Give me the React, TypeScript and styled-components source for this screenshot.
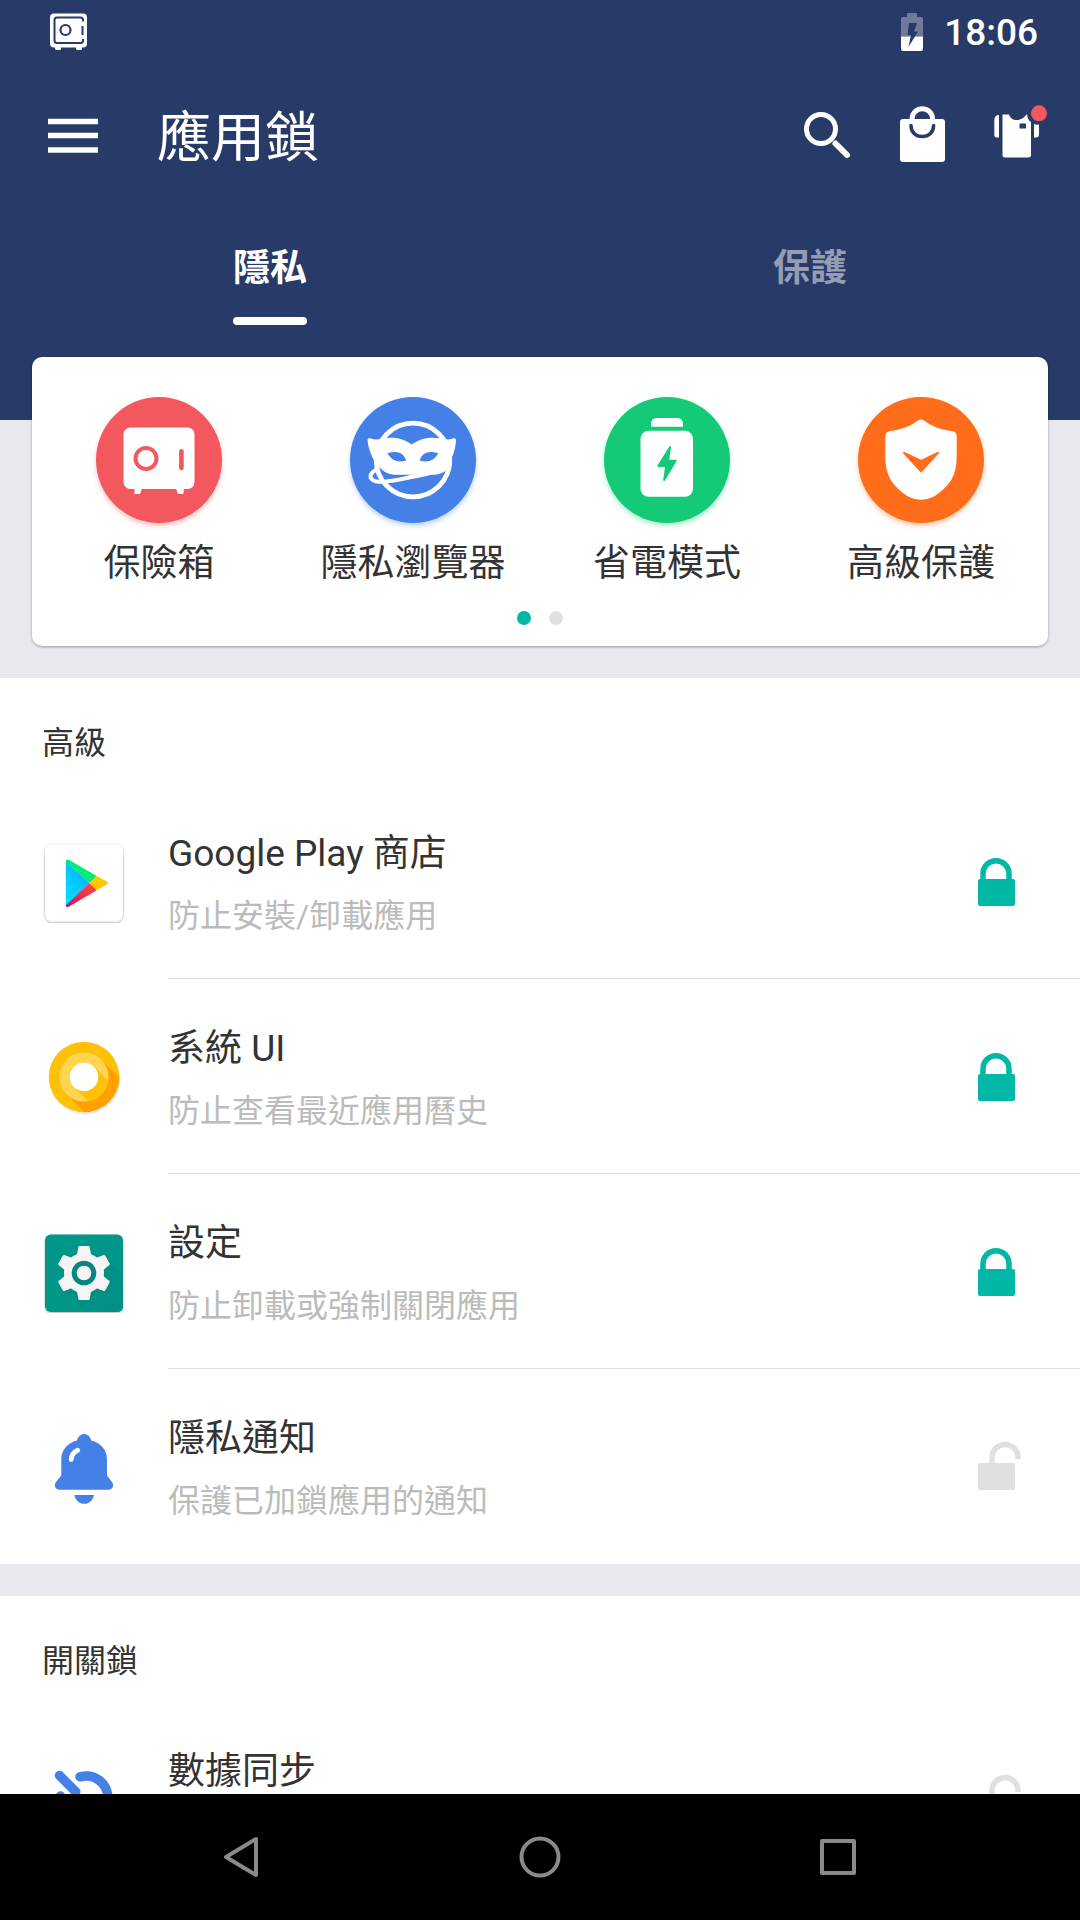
import React, { useState } from "react";
import styled, { createGlobalStyle } from "styled-components";

const color = {
  navy: "#283a68",
  canvas: "#e8e9ee",
  teal: "#01b8a7",
  red: "#f3585f",
  blue: "#4480e6",
  green: "#15ca76",
  orange: "#ff6d1a",
  ink: "#333333",
  muted: "#bbbbbb",
  idle: "#e0e0e0",
};

const GlobalStyle = createGlobalStyle`
  *, *::before, *::after { box-sizing: border-box; }
  body {
    margin: 0;
    background: ${color.canvas};
    color: ${color.ink};
    font-family: Roboto, "Noto Sans CJK TC", sans-serif;
  }
  h1, h2, p, ul { margin: 0; padding: 0; font-weight: 400; }
  ul { list-style: none; }
  button {
    border: 0;
    padding: 0;
    background: none;
    color: inherit;
    font: inherit;
    cursor: pointer;
  }
  svg { display: block; }
`;

const Screen = styled.div`
  display: flex;
  flex-direction: column;
  height: 100vh;
`;

const Content = styled.main`
  flex: 1;
  min-height: 0;
  overflow-y: auto;
  scrollbar-width: none;
`;

const Header = styled.header`
  padding-bottom: 95px;
  background: ${color.navy};
  color: #fff;
`;

const StatusBar = styled.div`
  display: flex;
  align-items: center;
  justify-content: space-between;
  height: 63px;
  padding: 0 42px 0 50px;
`;

const StatusGroup = styled.div`
  display: flex;
  align-items: center;
  gap: 21px;
`;

const Clock = styled.time`
  padding-top: 3px;
  font-size: 37px;
  font-weight: 500;
  line-height: 44px;
`;

const Toolbar = styled.div`
  display: flex;
  align-items: center;
  height: 145px;
  padding: 0 14px 0 25px;
`;

const ToolButton = styled.button`
  width: 96px;
  height: 96px;
`;

const Title = styled.h1`
  flex: 1;
  padding: 6px 0 0 36px;
  font-size: 54px;
  line-height: 76px;
`;

const Tabs = styled.div`
  display: grid;
  grid-template-columns: repeat(2, 1fr);
  height: 117px;
`;

const Tab = styled.button<{ $active: boolean }>`
  display: flex;
  flex-direction: column;
  align-items: center;
  padding-top: 35px;
  color: ${(p) => (p.$active ? "#fff" : "#949db4")};
  font-size: 37px;
  font-weight: 700;
  line-height: 52px;

  &::after {
    content: "";
    width: 74px;
    height: 8px;
    margin-top: 22px;
    border-radius: 4px;
    background: ${(p) => (p.$active ? "#fff" : "transparent")};
  }
`;

const Card = styled.section`
  margin: -63px 32px 32px;
  padding: 40px 0 21px;
  border-radius: 10px;
  background: #fff;
  box-shadow: 0 1px 3px rgba(0, 0, 0, 0.35);
`;

const Features = styled.div`
  display: grid;
  grid-template-columns: repeat(4, 1fr);
`;

const Feature = styled.button`
  display: flex;
  flex-direction: column;
  align-items: center;
  gap: 15px;
  font-size: 37px;
  line-height: 52px;
`;

const Disc = styled.span<{ $fill: string }>`
  width: 126px;
  height: 126px;
  border-radius: 50%;
  background: ${(p) => p.$fill};
  box-shadow: 0 3px 5px ${(p) => p.$fill}59;
`;

const Pager = styled.div`
  display: flex;
  justify-content: center;
  gap: 18px;
  margin-top: 21px;
`;

const Dot = styled.span<{ $active?: boolean }>`
  width: 14px;
  height: 14px;
  border-radius: 50%;
  background: ${(p) => (p.$active ? color.teal : color.idle)};
`;

const Section = styled.section`
  background: #fff;

  & + & {
    margin-top: 32px;
  }
`;

const SectionTitle = styled.h2`
  padding: 43px 42px 19px;
  font-size: 32px;
  line-height: 44px;
`;

const Row = styled.li`
  display: flex;
  min-height: 195px;
  padding-left: 42px;
`;

const AppIcon = styled.span`
  align-self: center;
  width: 84px;
  margin-right: 42px;
  padding-bottom: 1px;
`;

const RowBody = styled.div`
  display: flex;
  flex: 1;
  align-items: center;
  padding-right: 42px;
  border-bottom: 1px solid ${color.idle};

  ${Row}:last-child & {
    border-color: transparent;
  }
`;

const RowText = styled.div`
  display: flex;
  flex: 1;
  flex-direction: column;
  align-self: flex-start;
  gap: 14px;
  padding-top: 44px;
`;

const RowTitle = styled.p`
  font-size: 37px;
  line-height: 52px;
`;

const RowNote = styled.p`
  color: ${color.muted};
  font-size: 32px;
  line-height: 40px;
  padding-top: 2px;
`;

const LockButton = styled.button`
  width: 84px;
  height: 84px;
`;

const NavBar = styled.nav`
  display: grid;
  grid-template-columns: repeat(3, 1fr);
  flex: none;
  height: 126px;
  padding: 0 93px;
  background: #000;
`;

const NavButton = styled.button`
  display: flex;
  align-items: center;
  justify-content: center;
`;

/* Status bar icons */

const StatusSafe = () => (
  <svg width="38" height="38" viewBox="0 0 38 38" aria-hidden="true">
    <rect x="0" y="0.5" width="37" height="34" rx="4" fill="#fff" />
    <rect x="5" y="33" width="6" height="4" rx="1.5" fill="#fff" />
    <rect x="26" y="33" width="6" height="4" rx="1.5" fill="#fff" />
    <path
      d="M33 8.5V7q0-2.500-2.500-2.500H7q-2.500 0-2.500 2.500v20.500q0 2.500 2.500 2.500h23.500q2.500 0 2.500-2.500V26M32.500 13v9"
      fill="none"
      stroke={color.navy}
      strokeWidth="2"
    />
    <circle cx="15.500" cy="17" r="5" fill="none" stroke={color.navy} strokeWidth="2.200" />
  </svg>
);

const StatusBattery = () => (
  <svg width="22" height="38" viewBox="0 0 22 38" aria-hidden="true">
    <path d="M6 0h10v4h4q2 0 2 2v17.500H0V6q0-2 2-2h4z" fill="#6f7b99" />
    <path d="M0 23.500h22V36q0 2-2 2H2q-2 0-2-2z" fill="#fff" />
    <path d="M8 10h8l-3 8.500h4L7.500 34l2.500-12H6.500z" fill={color.navy} />
  </svg>
);

/* Toolbar icons */

const MenuIcon = () => (
  <svg width="96" height="96" viewBox="0 0 96 96" aria-hidden="true">
    <path d="M23 33.500h50M23 47.500h50M23 62h50" stroke="#fff" strokeWidth="5.500" />
  </svg>
);

const SearchIcon = () => (
  <svg width="96" height="96" viewBox="0 0 96 96" aria-hidden="true">
    <circle cx="43" cy="41" r="14.500" fill="none" stroke="#fff" strokeWidth="5" />
    <path d="M57.500 55.500L69 67" stroke="#fff" strokeWidth="6" strokeLinecap="round" />
  </svg>
);

const BagIcon = () => (
  <svg width="96" height="96" viewBox="0 0 96 96" aria-hidden="true">
    <rect x="26" y="31" width="45" height="43" rx="3" fill="#fff" />
    <path d="M38 32.500V31a10.300 10.300 0 0 1 20.600 0v1.500" fill="none" stroke="#fff" strokeWidth="5" />
    <path
      d="M37 37.500c0 6.500 4.500 11 11.200 11s11.400-4.500 11.400-11"
      fill="none"
      stroke={color.navy}
      strokeWidth="3.500"
      strokeLinecap="round"
    />
  </svg>
);

const ShirtIcon = () => (
  <svg width="96" height="96" viewBox="0 0 96 96" aria-hidden="true">
    <path
      d="M32.500 26.500H39c1.500 4 4 5.500 7.500 5.500 5 0 7.500-2.500 10.500-6 .5 4 1.500 6.500 4 8v33q0 2.500-2.500 2.500H35q-2.500 0-2.500-2.500z"
      fill="#fff"
    />
    <path d="M29 27v22.500h-2q-2.700 0-2.700-2.700V32.500Q24.300 27 29 27z" fill="#fff" />
    <path d="M64 36q2.500 1 5 .5V46q0 3.500-3 3.500h-2z" fill="#fff" />
    <rect x="49.500" y="35.500" width="6.500" height="5" rx="0.500" fill={color.navy} />
    <circle cx="69" cy="25.300" r="8" fill={color.red} />
  </svg>
);

/* Feature icons */

const SafeArt = () => (
  <svg width="126" height="126" viewBox="0 0 126 126" aria-hidden="true">
    <rect x="27.500" y="30.500" width="71" height="61.500" rx="7" fill="#fff" />
    <path d="M39 91h7l-1.500 5q-.5 1-1.500 1h-3.500q-1.500 0-1.200-1.500zM80 91h7.700v4.500q0 1.500-1.500 1.500h-3q-1.200 0-1.700-1z" fill="#fff" />
    <circle cx="50" cy="61.500" r="10.500" fill="none" stroke={color.red} strokeWidth="4" />
    <path d="M85.400 54.300v16.700" stroke={color.red} strokeWidth="4.600" strokeLinecap="round" />
  </svg>
);

const MaskArt = () => (
  <svg width="126" height="126" viewBox="0 0 126 126" aria-hidden="true">
    <circle cx="63" cy="63" r="36.800" fill="none" stroke="#fff" strokeWidth="4.800" />
    <path
      d="M17.500 43.500c0-2.200 1.600-2.900 3.500-1.900 3 1.400 7 1 12 0 12-2.200 21 .400 28.700 6 8-5.600 17-8.200 29-6 5 1 9 1.400 12 0 2-1 3.500 0 3.300 2.200-.7 7-2 12.700-4.300 17.200 0 5 .300 6-.200 8.500C96 74 91 77.700 84 77.700H43c-8-1.200-13.500-6-18-13-4.200-6.500-6.800-14-7.500-21.200z"
      fill="#fff"
    />
    <path
      d="M37.500 56.300c10.500-3.300 16.500.7 18.700 7.300-8.700 2.300-14.700 0-18.700-7.300zM88.300 56.300c-10.500-3.300-16.500.7-18.700 7.300 8.700 2.300 14.700 0 18.700-7.300z"
      fill={color.blue}
    />
    <path
      d="M98.500 68C88 75 75 77.500 60 80.300c-12 2.700-24 4.900-31.500 4.400-8-.700-9.500-4.900-6.500-8.700 1.200-1.500 2.500-2.300 4-2.800"
      fill="none"
      stroke="#fff"
      strokeWidth="4"
    />
    <path d="M30.300 71.500c3.500 3.800 8 6 14 6.500 4 .4 8 .2 12.500.4-8 2-15 3.500-22 3.800-2.500-3.500-4-7.200-4.500-10.700z" fill={color.blue} />
  </svg>
);

const BatteryArt = () => (
  <svg width="126" height="126" viewBox="0 0 126 126" aria-hidden="true">
    <path d="M47 29.700V27q0-6 6-6h20q6 0 6 6v2.700z" fill="#fff" />
    <rect x="36.500" y="33.800" width="52.500" height="66" rx="8" fill="#fff" />
    <path
      d="M65.300 49.500c.5-1 1.800-.6 1.700.5L65.200 62.700h6.300c1.200 0 1.500.8 1 1.600L61 83.400c-.6 1-1.900.6-1.800-.5L61 70h-6.400c-1.100 0-1.500-.8-1-1.700z"
      fill={color.green}
    />
  </svg>
);

const ShieldArt = () => (
  <svg width="126" height="126" viewBox="0 0 126 126" aria-hidden="true">
    <path
      d="M60.500 23.300q2.500-1.600 5 0C75 30 81 32 94.500 34.300q4.200.7 4.200 5.500V60c0 19-7.500 29.500-22.700 39.500q-6.500 3.300-13 3.300t-13-3.300C34.800 89.500 27.300 79 27.300 60V39.800q0-4.800 4.200-5.500C45 32 51 30 60.500 23.300z"
      fill="#fff"
    />
    <path d="M46.500 55L63 62.700 79.500 55c1.300-.4 2 .4 1.200 1.400L64 74.700q-1 1-2 0L45.300 56.400c-.8-1-.1-1.800 1.200-1.400z" fill={color.orange} />
  </svg>
);

/* List icons */

const PlayArt = () => (
  <svg width="84" height="84" viewBox="0 0 84 84" aria-hidden="true">
    <defs>
      <linearGradient id="playBlue" x1="1" y1="0" x2="0" y2="1">
        <stop offset="0.200" stopColor="#00b4ff" />
        <stop offset="1" stopColor="#00e3ff" />
      </linearGradient>
      <linearGradient id="playRed" x1="1" y1="0" x2="0" y2="1">
        <stop offset="0.300" stopColor="#ff3a44" />
        <stop offset="1" stopColor="#c31162" />
      </linearGradient>
      <filter id="playShade" x="-10%" y="-10%" width="120%" height="120%">
        <feDropShadow dx="0" dy="0.800" stdDeviation="1" floodOpacity="0.400" />
      </filter>
    </defs>
    <rect x="3" y="5.500" width="78" height="77" rx="7" fill="#fff" filter="url(#playShade)" />
    <path d="M23.800 21.500L47.500 44 23.800 67.500z" fill="url(#playBlue)" />
    <path d="M23.800 22.500q.2-3 3-1.700l28 16.200-7.300 7z" fill="#00ee76" />
    <path d="M23.800 66.500q.2 2.500 3 1.200l28-16.400-7.300-7.300z" fill="url(#playRed)" />
    <path d="M54.800 37l10 5.600q2.400 1.500 0 3l-10 5.700-7.300-7.300z" fill="#ffc900" />
  </svg>
);

const OreoArt = () => (
  <svg width="84" height="84" viewBox="0 0 84 84" aria-hidden="true">
    <defs>
      <clipPath id="oreoOuter"><circle cx="42" cy="43" r="35.300" /></clipPath>
      <clipPath id="oreoMid"><circle cx="42" cy="43" r="24.600" /></clipPath>
    </defs>
    <circle cx="43" cy="45" r="35.500" fill="#ececec" />
    <circle cx="42" cy="43" r="35.300" fill="#ffc107" />
    <path d="M59.400 25.600l40 40-34.800 34.800-40-40z" fill="#ffa000" clipPath="url(#oreoOuter)" />
    <circle cx="42" cy="43" r="24.600" fill="#ffd54f" />
    <path d="M52 33l40 40-20 20-40-40z" fill="#ffc107" clipPath="url(#oreoMid)" />
    <circle cx="42" cy="43" r="14.200" fill="#fff" />
  </svg>
);

const gearTeeth = [0, 60, 120, 180, 240, 300];

const SettingsArt = () => (
  <svg width="84" height="84" viewBox="0 0 84 84" aria-hidden="true">
    <defs>
      <filter id="tileShade" x="-10%" y="-10%" width="120%" height="120%">
        <feDropShadow dx="0" dy="0.800" stdDeviation="0.800" floodOpacity="0.350" />
      </filter>
    </defs>
    <rect x="3" y="5.500" width="78" height="77.500" rx="6" fill="#009688" filter="url(#tileShade)" />
    <path d="M66 32l15 14v31q0 6-6 6H43L22 62z" fill="#009085" />
    <g fill="#f5f5f5">
      <circle cx="42" cy="44" r="20" />
      {gearTeeth.map((angle) => (
        <path
          key={angle}
          d="M37.500 17h9q1 0 1.200 1l1.300 7.500 3.500 3.500h-21l3.500-3.500L36.300 18q.2-1 1.200-1z"
          transform={`rotate(${angle} 42 44)`}
        />
      ))}
    </g>
    <circle cx="42" cy="44" r="9.800" fill="#f5f5f5" stroke="#0a8585" strokeWidth="5" />
  </svg>
);

const BellArt = () => (
  <svg width="84" height="84" viewBox="0 0 84 84" aria-hidden="true">
    <path
      d="M35 16.600a7.200 7.800 0 0 1 14.200 0C58.500 19 65 26 65 35v16.500l5 6.500c2.500 3.500.5 7.700-3.500 7.700h-49c-4 0-6-4.200-3.500-7.700l5.300-6.500V35C19.300 26 25.800 19 35 16.600z"
      fill={color.blue}
    />
    <path d="M32.300 71h19.800c-1.300 5.500-5 8.800-9.900 8.800s-8.600-3.300-9.900-8.800z" fill={color.blue} />
    <path d="M29.200 35.500c.2-4.500 2.500-7.500 6.500-9.300" fill="none" stroke="#fff" strokeWidth="4.800" strokeLinecap="round" />
  </svg>
);

const SyncOffArt = () => (
  <svg width="84" height="84" viewBox="0 0 84 84" aria-hidden="true">
    <g fill="none" stroke={color.blue} strokeWidth="9.500" strokeLinecap="round">
      <path d="M17.500 18.500l50 50" strokeDasharray="23 100" />
      <path d="M38 19.800c14-3.500 28 5.500 28 22.200v6" />
      <path d="M18.500 39c-2 17 10 28 26 26" />
    </g>
  </svg>
);

const LockArt = ({ locked }: { locked: boolean }) => (
  <svg width="84" height="84" viewBox="0 0 84 84" aria-hidden="true">
    <rect x="24" y={locked ? 40 : 39} width="37" height="27" rx="2" fill={locked ? color.teal : color.idle} />
    <path
      d={locked ? "M29 41v-6.300a13 13 0 0 1 26 0V41" : "M38 40v-6.600a13 13 0 0 1 26 0V35"}
      fill="none"
      stroke={locked ? color.teal : color.idle}
      strokeWidth="5.500"
    />
  </svg>
);

/* System navigation icons */

const navStroke = { fill: "none", stroke: "#8a8a8a", strokeWidth: 4, strokeLinejoin: "round" as const };

const features = [
  { label: "保險箱", fill: color.red, art: <SafeArt /> },
  { label: "隱私瀏覽器", fill: color.blue, art: <MaskArt /> },
  { label: "省電模式", fill: color.green, art: <BatteryArt /> },
  { label: "高級保護", fill: color.orange, art: <ShieldArt /> },
];

interface Item {
  title: string;
  note?: string;
  locked: boolean;
  art: React.ReactNode;
}

const sections: { title: string; items: Item[] }[] = [
  {
    title: "高級",
    items: [
      { title: "Google Play 商店", note: "防止安裝/卸載應用", locked: true, art: <PlayArt /> },
      { title: "系統 UI", note: "防止查看最近應用曆史", locked: true, art: <OreoArt /> },
      { title: "設定", note: "防止卸載或強制關閉應用", locked: true, art: <SettingsArt /> },
      { title: "隱私通知", note: "保護已加鎖應用的通知", locked: false, art: <BellArt /> },
    ],
  },
  {
    title: "開關鎖",
    items: [{ title: "數據同步", locked: false, art: <SyncOffArt /> }],
  },
];

function LockRow({ item }: { item: Item }) {
  const [locked, setLocked] = useState(item.locked);
  return (
    <Row>
      <AppIcon>{item.art}</AppIcon>
      <RowBody>
        <RowText>
          <RowTitle>{item.title}</RowTitle>
          {item.note && <RowNote>{item.note}</RowNote>}
        </RowText>
        <LockButton type="button" aria-label={item.title} aria-pressed={locked} onClick={() => setLocked(!locked)}>
          <LockArt locked={locked} />
        </LockButton>
      </RowBody>
    </Row>
  );
}

export default function App() {
  const [tab, setTab] = useState(0);
  return (
    <Screen lang="zh-Hant">
      <GlobalStyle />
      <Content>
        <Header>
          <StatusBar>
            <StatusSafe />
            <StatusGroup>
              <StatusBattery />
              <Clock>18:06</Clock>
            </StatusGroup>
          </StatusBar>
          <Toolbar>
            <ToolButton type="button" aria-label="選單"><MenuIcon /></ToolButton>
            <Title>應用鎖</Title>
            <ToolButton type="button" aria-label="搜尋"><SearchIcon /></ToolButton>
            <ToolButton type="button" aria-label="商店"><BagIcon /></ToolButton>
            <ToolButton type="button" aria-label="主題"><ShirtIcon /></ToolButton>
          </Toolbar>
          <Tabs role="tablist">
            {["隱私", "保護"].map((label, i) => (
              <Tab key={label} type="button" role="tab" aria-selected={tab === i} $active={tab === i} onClick={() => setTab(i)}>
                {label}
              </Tab>
            ))}
          </Tabs>
        </Header>
        <Card>
          <Features>
            {features.map((f) => (
              <Feature key={f.label} type="button">
                <Disc $fill={f.fill}>{f.art}</Disc>
                {f.label}
              </Feature>
            ))}
          </Features>
          <Pager>
            <Dot $active />
            <Dot />
          </Pager>
        </Card>
        {sections.map((section) => (
          <Section key={section.title}>
            <SectionTitle>{section.title}</SectionTitle>
            <ul>
              {section.items.map((item) => (
                <LockRow key={item.title} item={item} />
              ))}
            </ul>
          </Section>
        ))}
      </Content>
      <NavBar>
        <NavButton type="button" aria-label="返回">
          <svg width="42" height="42" viewBox="0 0 42 42" aria-hidden="true">
            <path d="M35 3v36L5 21z" {...navStroke} />
          </svg>
        </NavButton>
        <NavButton type="button" aria-label="主畫面">
          <svg width="42" height="42" viewBox="0 0 42 42" aria-hidden="true">
            <circle cx="21" cy="21" r="18.500" {...navStroke} />
          </svg>
        </NavButton>
        <NavButton type="button" aria-label="最近">
          <svg width="42" height="42" viewBox="0 0 42 42" aria-hidden="true">
            <rect x="5" y="5" width="32" height="32" {...navStroke} />
          </svg>
        </NavButton>
      </NavBar>
    </Screen>
  );
}
